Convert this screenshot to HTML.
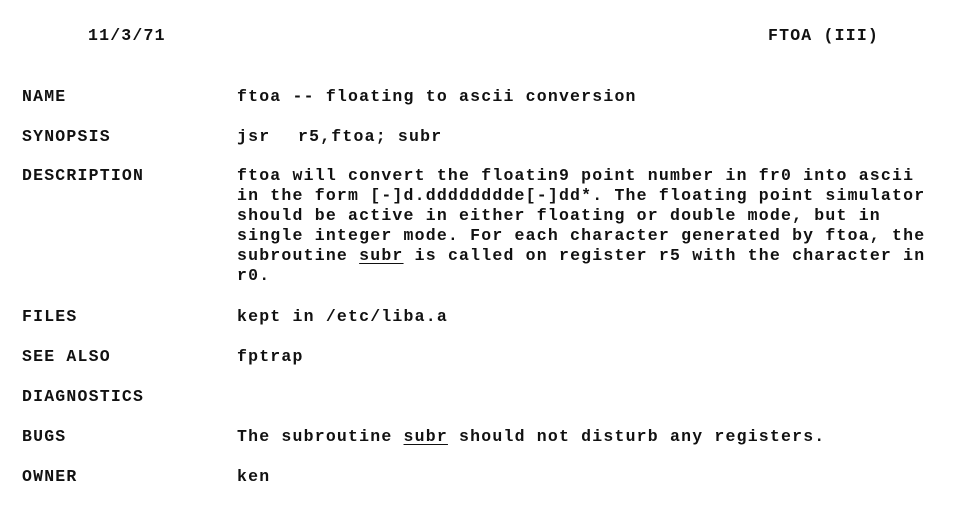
<!DOCTYPE html>
<html><head><meta charset="utf-8"><style>
body{margin:0;width:954px;height:516px;background:#fff;position:relative;overflow:hidden}
div{position:absolute;font-family:"Liberation Mono",monospace;font-weight:bold;font-size:16.5px;letter-spacing:1.2px;line-height:20px;color:#111;white-space:pre}
u{text-decoration:underline;text-underline-offset:3px;text-decoration-thickness:1px}
</style></head><body>
<div style="left:88px;top:26px">11/3/71</div>
<div style="left:768px;top:26px">FTOA (III)</div>
<div style="left:22px;top:87px">NAME</div>
<div style="left:237px;top:87px">ftoa -- floating to ascii conversion</div>
<div style="left:22px;top:127px">SYNOPSIS</div>
<div style="left:237px;top:127px">jsr</div>
<div style="left:298px;top:127px">r5,ftoa; subr</div>
<div style="left:22px;top:166px">DESCRIPTION</div>
<div style="left:237px;top:166px">ftoa will convert the floatin9 point number in fr0 into ascii
in the form [-]d.dddddddde[-]dd*. The floating point simulator
should be active in either floating or double mode, but in
single integer mode. For each character generated by ftoa, the
subroutine <u>subr</u> is called on register r5 with the character in
r0.</div>
<div style="left:22px;top:307px">FILES</div>
<div style="left:237px;top:307px">kept in /etc/liba.a</div>
<div style="left:22px;top:347px">SEE ALSO</div>
<div style="left:237px;top:347px">fptrap</div>
<div style="left:22px;top:387px">DIAGNOSTICS</div>
<div style="left:22px;top:427px">BUGS</div>
<div style="left:237px;top:427px">The subroutine <u>subr</u> should not disturb any registers.</div>
<div style="left:22px;top:467px">OWNER</div>
<div style="left:237px;top:467px">ken</div>
</body></html>
